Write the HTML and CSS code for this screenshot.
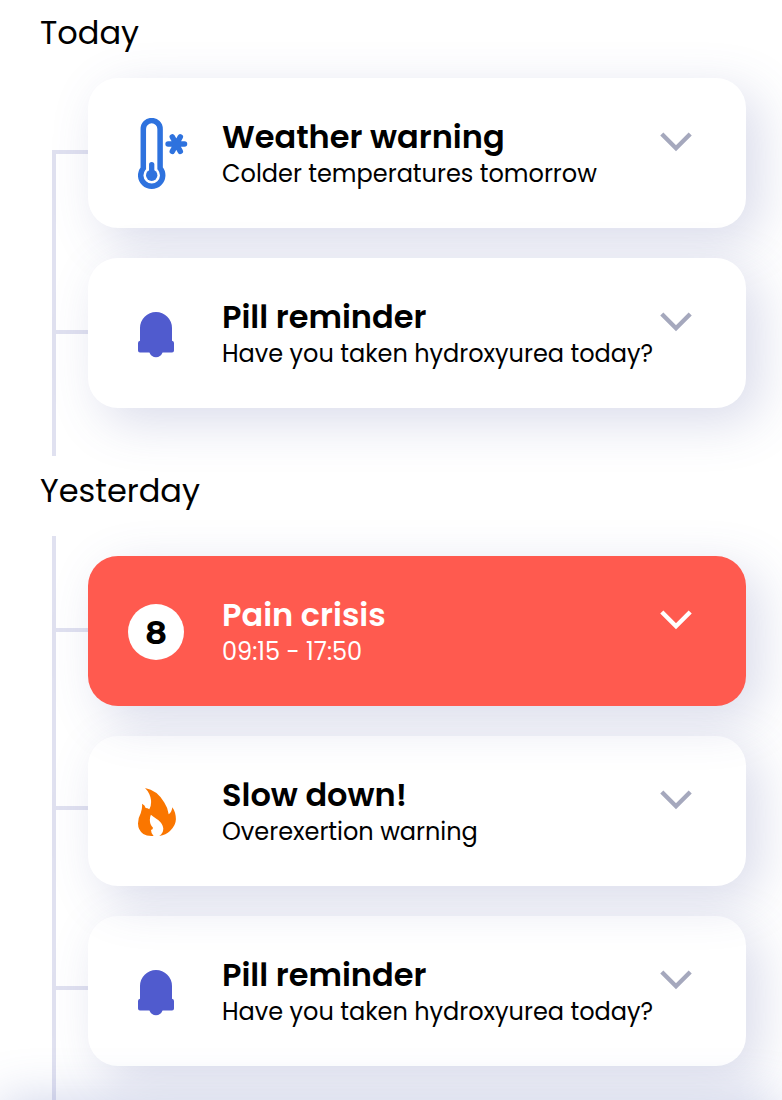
FILE: index.html
```html
<!DOCTYPE html>
<html lang="en">
<head>
<meta charset="utf-8">
<title>Notifications</title>
<link rel="stylesheet" href="styles.css">
</head>
<body>
<svg width="0" height="0" class="sprite">
  <symbol id="chevron" viewBox="0 0 32 20"><path d="M1.800 2 16 16.200 30.200 2" fill="none" stroke="currentColor" stroke-width="4.400"/></symbol>
  <symbol id="bell" viewBox="0 0 36 46"><path d="M2 28.800V16a16 16 0 0 1 32 0V28.800Q36 29.200 36 31V38.500Q36 40.400 34 40.400H24.600Q22.500 45.200 18 45.200T11.400 40.400H2Q0 40.400 0 38.500V31Q0 29.200 2 28.800Z" fill="currentColor"/></symbol>
</svg>
<main class="feed">
  <section class="day day-today">
    <h2 class="day-title">Today</h2>
    <div class="timeline">
      <div class="rail"></div>
      <div class="entries">
        <div class="entry"><i class="branch"></i><article class="card">
          <div class="icon"><svg class="thermo" width="50" height="72" viewBox="0 0 50 72" fill="none" stroke="#2e72de"><path d="M5.300 50.200V11a8.400 8.400 0 0 1 16.800 0V50.200A11 11 0 1 1 5.300 50.200Z" stroke-width="5.500"/><circle cx="13.700" cy="57.300" r="5.700" fill="#2e72de" stroke="none"/><path d="M13.700 57V46.600" stroke-width="5.300" stroke-linecap="round"/><path d="M30.100 26.100H46.500M34.300 18.900 42.300 33.300M42.300 18.900 34.300 33.300" stroke-width="5.500" stroke-linecap="round"/></svg></div>
          <div class="copy"><h3>Weather warning</h3><p>Colder temperatures tomorrow</p></div>
          <svg class="chevron"><use href="#chevron"/></svg></article></div>
        <div class="entry"><i class="branch"></i><article class="card">
          <div class="icon"><svg class="bell"><use href="#bell"/></svg></div>
          <div class="copy"><h3>Pill reminder</h3><p>Have you taken hydroxyurea today?</p></div>
          <svg class="chevron"><use href="#chevron"/></svg></article></div>
      </div>
    </div>
  </section>
  <section class="day day-yesterday">
    <h2 class="day-title">Yesterday</h2>
    <div class="timeline">
      <div class="rail"></div>
      <div class="entries">
        <div class="entry layer-top"><i class="branch"></i><article class="card card-alert">
          <div class="icon"><span class="score">8</span></div>
          <div class="copy"><h3>Pain crisis</h3><p>09:15 - 17:50</p></div>
          <svg class="chevron"><use href="#chevron"/></svg></article></div>
        <div class="entry entry-high layer-middle"><i class="branch"></i><article class="card">
          <div class="icon"><svg class="flame" width="38" height="48" viewBox="0 0 38 48"><path d="M7 0Q19 2 26.300 14.500Q30 20 30.700 26.300Q34 24 34.300 19.300Q37.700 24 37.900 31Q38 37 32 43Q28 47 21.300 48Q25.300 45 25.300 40.500Q25 36 20.500 32.200Q15 28.500 12.900 26.700Q11 31 12.500 36Q13.500 38.500 15 39.700Q15 41.500 13 42Q13 45.500 15.600 48Q9 48.200 5.300 46Q0 42 0 35.500Q0 30 2.700 25.300Q4.600 20 4 15.700Q7 17 7.700 20Q9.500 20 11.300 21.300Q13.500 18 13 12Q12 5 7 0Z" fill="#fa7600"/></svg></div>
          <div class="copy"><h3>Slow down!</h3><p>Overexertion warning</p></div>
          <svg class="chevron"><use href="#chevron"/></svg></article></div>
        <div class="entry entry-high"><i class="branch"></i><article class="card">
          <div class="icon"><svg class="bell"><use href="#bell"/></svg></div>
          <div class="copy"><h3>Pill reminder</h3><p>Have you taken hydroxyurea today?</p></div>
          <svg class="chevron"><use href="#chevron"/></svg></article></div>
      </div>
    </div>
  </section>
</main>
<div class="bottom-bar"></div>
</body>
</html>
```
FILE: styles.css
```css
* { box-sizing: border-box; }
body { margin: 0; background: #fff; color: #000; font-family: Poppins, Inter, sans-serif; height: 1100px; overflow: hidden; }
.sprite { display: block; }
.feed { display: flex; flex-direction: column; }
.day-title { margin: 0; padding-left: 40px; font-size: 32px; font-weight: 400; line-height: 48px; height: 69px; white-space: nowrap; }
.day-today { padding-top: 9px; height: 456px; }
.day-yesterday { padding-top: 11px; }
.day-yesterday .day-title { height: 89px; }
.timeline { display: grid; grid-template-columns: 4px 694px; padding-left: 52px; }
.rail { background: #e0e1f0; }
.day-today .rail { margin-top: 72px; height: 306px; }
.day-yesterday .rail { margin-top: -20px; height: 564px; }
.entries { display: flex; flex-direction: column; gap: 30px; }
.entry { display: flex; align-items: flex-start; height: 150px; }
.branch { width: 32px; height: 4px; margin-top: 72px; background: #e0e1f0; }
.entry-high .branch { margin-top: 70px; }
.layer-top { z-index: 2; }
.layer-middle { z-index: 1; }
.card { display: flex; width: 658px; height: 150px; padding-left: 40px; border-radius: 30px; background: #fff; box-shadow: 14px 14px 50px rgba(80, 92, 160, .21); }
.card-alert { background: #ff5a4f; color: #fff; }
.icon { width: 94px; flex: none; }
.thermo { display: block; margin: 40px 0 0 10px; }
.bell { display: block; width: 36px; height: 46px; margin: 54px 0 0 10px; color: #505bce; }
.flame { display: block; margin: 52px 0 0 10px; }
.score { display: flex; align-items: center; justify-content: center; width: 56px; height: 56px; margin-top: 48px; border-radius: 50%; background: #fff; color: #000; font: 700 32px/56px Montserrat, "Open Sans", sans-serif; padding-top: 2px; }
.copy { width: 438px; padding-top: 36px; white-space: nowrap; }
.copy h3 { margin: 0; font-size: 32px; line-height: 46px; font-weight: 600; }
.copy p { margin: 0; font-size: 24px; line-height: 28px; font-weight: 400; }
.chevron { width: 32px; height: 20px; margin-top: 54px; color: #a5a8bd; flex: none; }
.card-alert .chevron { color: #fff; }
.bottom-bar { position: fixed; z-index: 3; left: 0; right: 0; bottom: -100px; height: 100px; box-shadow: 0 0 50px rgba(83, 102, 179, .28); }
```
